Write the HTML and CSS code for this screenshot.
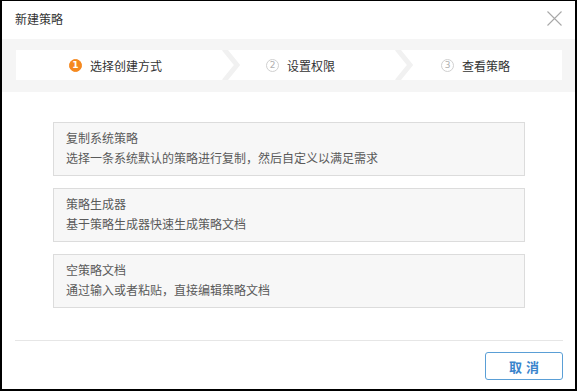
FILE: index.html
```html
<!DOCTYPE html>
<html lang="zh-CN">
<head>
    <meta charset="UTF-8">
    <meta name="viewport" content="width=device-width, initial-scale=1.0">
    <title>新建策略</title>
    <link rel="stylesheet" href="styles.css">
</head>
<body>
    <div class="dialog">
        <div class="dialog-header">
            <span class="dialog-title">新建策略</span>
            <svg class="close" width="15" height="15" viewBox="0 0 15 15">
                <path d="M0.5 0.5 L14.5 14.5 M14.5 0.5 L0.5 14.5" stroke="#a8a8a8" stroke-width="1.1" fill="none"/>
            </svg>
        </div>

        <!-- step bar -->
        <div class="steps-band">
            <div class="steps">
                <div class="step step-1">
                    <span class="step-num active">1</span>
                    <span class="step-text">选择创建方式</span>
                </div>
                <svg class="sep" width="18" height="30" viewBox="0 0 18 30">
                    <polyline points="2,-1 15,15 2,31" stroke="#f1f1f1" stroke-width="5" fill="none"/>
                </svg>
                <div class="step step-2">
                    <span class="step-num">2</span>
                    <span class="step-text">设置权限</span>
                </div>
                <svg class="sep" width="18" height="30" viewBox="0 0 18 30">
                    <polyline points="2,-1 15,15 2,31" stroke="#f1f1f1" stroke-width="5" fill="none"/>
                </svg>
                <div class="step step-3">
                    <span class="step-num">3</span>
                    <span class="step-text">查看策略</span>
                </div>
            </div>
        </div>

        <div class="dialog-body">
            <div class="option">
                <div class="option-title">复制系统策略</div>
                <div class="option-desc">选择一条系统默认的策略进行复制，然后自定义以满足需求</div>
            </div>
            <div class="option">
                <div class="option-title">策略生成器</div>
                <div class="option-desc">基于策略生成器快速生成策略文档</div>
            </div>
            <div class="option">
                <div class="option-title">空策略文档</div>
                <div class="option-desc">通过输入或者粘贴，直接编辑策略文档</div>
            </div>
        </div>

        <div class="dialog-footer">
            <button class="btn-cancel">取消</button>
        </div>
    </div>
</body>
</html>
```

FILE: styles.css
```css
html, body {
    margin: 0;
    height: 100%;
}
body {
    font-family: "Microsoft YaHei", "Noto Sans CJK SC", sans-serif;
    font-size: 12px;
    color: #555;
    background: #fff;
}
.dialog {
    box-sizing: border-box;
    height: 100vh;
    border: 2px solid #000;
    border-top-width: 1px;
    display: flex;
    flex-direction: column;
}
.dialog-header {
    height: 38px;
    padding: 0 13px 0 13px;
    display: flex;
    align-items: center;
    justify-content: space-between;
}
.dialog-title {
    color: #333;
    font-size: 12px;
    margin-top: -4px;
}
.close {
    margin-top: -4px;
}
.steps-band {
    background: #f5f5f5;
    padding: 11px 13px 12px 14px;
}
.steps {
    height: 30px;
    background: #fff;
    display: flex;
    align-items: center;
}
.step {
    display: flex;
    align-items: center;
    gap: 8px;
    height: 100%;
}
.step-1 {
    width: 206px;
    box-sizing: border-box;
    padding-left: 53px;
}
.step-2 {
    width: 155px;
    box-sizing: border-box;
    padding-left: 26px;
}
.step-3 {
    flex: 1;
    padding-left: 28px;
}
.sep {
    flex: none;
    display: block;
}
.step-num {
    box-sizing: border-box;
    width: 13px;
    height: 13px;
    border-radius: 50%;
    border: 1px solid #d0d0d0;
    color: #b0b0b0;
    font-size: 9px;
    line-height: 11px;
    text-align: center;
    font-family: "DejaVu Sans", sans-serif;
}
.step-num.active {
    background: #f5891f;
    border-color: #f5891f;
    color: #fff;
    font-weight: bold;
}
.step-text {
    color: #333;
    font-size: 12px;
}
.dialog-body {
    flex: 1;
    padding: 30px 50px 0 51px;
    display: flex;
    flex-direction: column;
    gap: 12px;
}
.option {
    height: 54px;
    box-sizing: border-box;
    background: #f7f7f7;
    border: 1px solid #dcdcdc;
    padding: 5px 12px 0;
    line-height: 20px;
}
.option-title {
    color: #5a5a5a;
}
.option-desc {
    color: #5a5a5a;
}
.dialog-footer {
    margin: 0 12px 0 13px;
    border-top: 1px solid #e6e6e6;
    padding: 11px 0 9px;
    display: flex;
    justify-content: flex-end;
}
.btn-cancel {
    width: 78px;
    height: 28px;
    background: #fff;
    border: 1px solid #5a9fd6;
    border-radius: 3px;
    color: #3a84cc;
    font-family: "Microsoft YaHei", "Noto Sans CJK SC", sans-serif;
    font-size: 13px;
    font-weight: bold;
    letter-spacing: 4px;
    text-indent: 4px;
    padding: 0;
    cursor: pointer;
}
```
